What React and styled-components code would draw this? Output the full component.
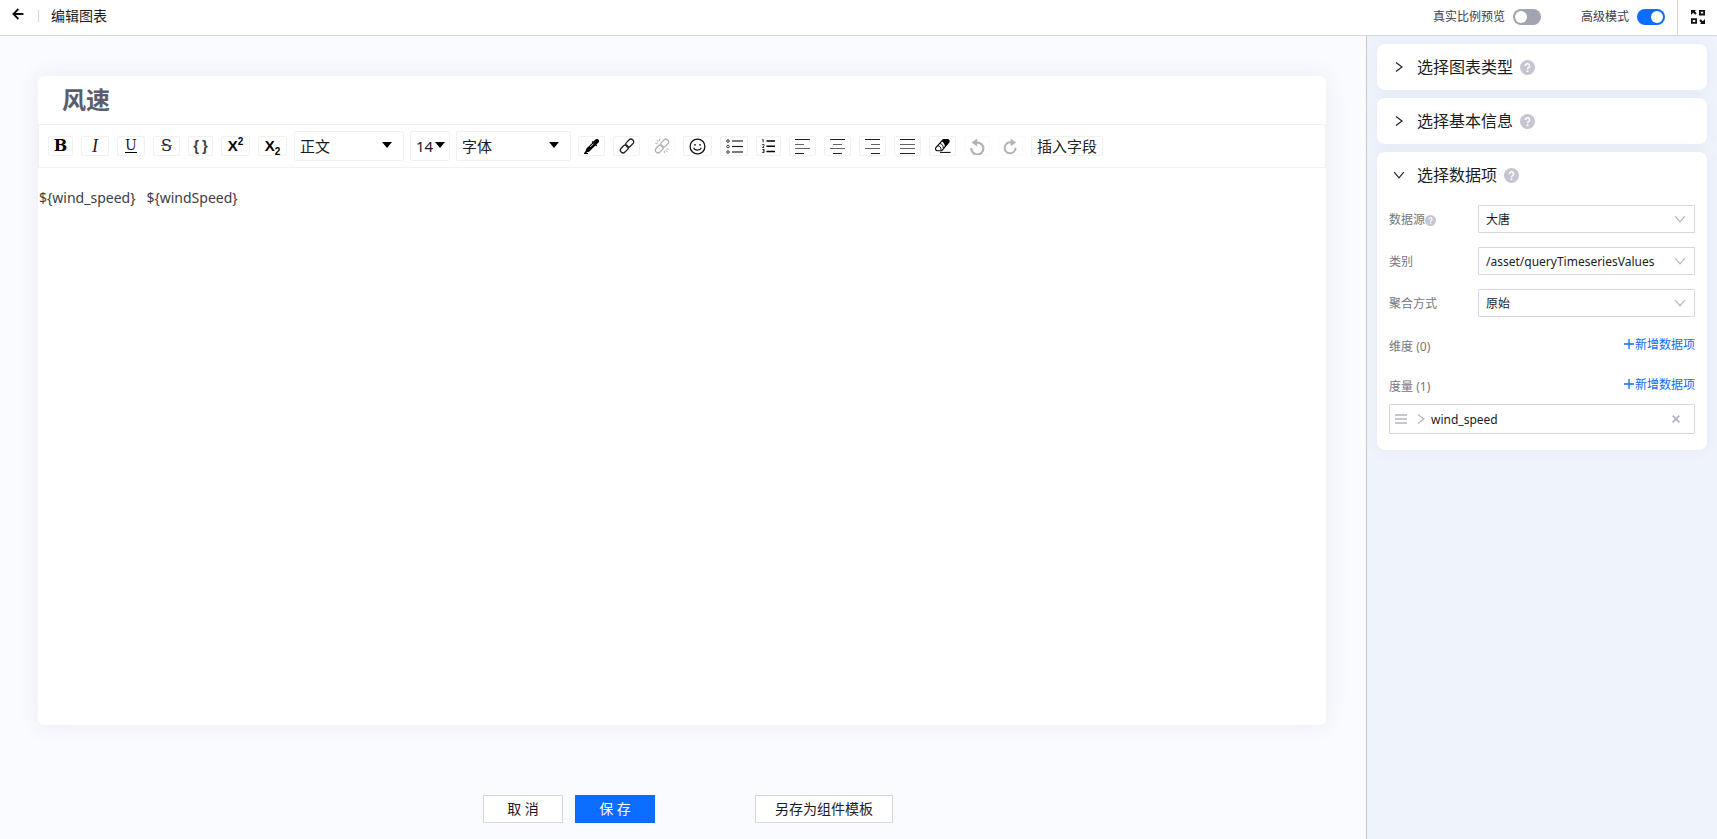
import React, { useState } from "react";
import styled, { createGlobalStyle } from "styled-components";

const ALIGN_LINES = {
  left: [[0, 15], [0, 9], [0, 15], [0, 9]],
  center: [[0, 15], [3, 12], [0, 15], [3, 12]],
  right: [[0, 15], [6, 15], [0, 15], [6, 15]],
  justify: [[0, 15], [0, 15], [0, 15], [0, 15]],
};

function AlignIcon({ type }) {
  return (
    <svg width="15" height="15" viewBox="0 0 15 15" aria-hidden="true">
      {ALIGN_LINES[type].map(([from, to], index) => (
        <rect
          key={index}
          x={from}
          y={[0, 5, 9, 14][index]}
          width={to - from}
          height="1"
          fill={index % 3 === 0 ? "#222" : "#666"}
        />
      ))}
    </svg>
  );
}

function BackIcon() {
  return (
    <svg width="12" height="12" viewBox="0 0 12 12" fill="none" stroke="#111" strokeWidth="1.8" aria-hidden="true">
      <path d="M11.4 6H1.8M6.4 1L1.4 6L6.4 11" />
    </svg>
  );
}

function FullscreenIcon() {
  return (
    <svg width="16" height="16" viewBox="0 0 16 16" aria-hidden="true">
      <path d="M9.9 1.9h4.2v3.6H9.9zM1.9 10.1h4.2v3.8H1.9z" fill="none" stroke="#111" strokeWidth="1.8" />
      <path d="M1 1h5L4.8 2.3l1.9 1.9-1.5 1.5-2-1.9L1 6zM15 15h-5l1.2-1.3-1.9-1.9 1.5-1.5 2 1.9L15 10z" fill="#111" />
    </svg>
  );
}

function Chevron({ open, size = 12, color = "#222" }) {
  return (
    <svg width={size} height={size} viewBox="0 0 12 12" fill="none" stroke={color} strokeWidth="1.2" aria-hidden="true">
      <path d={open ? "M1.2 3.2L6 8.8L10.8 3.2" : "M3 1.4L9 6L3 10.6"} />
    </svg>
  );
}

function HelpIcon({ size = 15 }) {
  return (
    <svg width={size} height={size} viewBox="0 0 15 15" aria-hidden="true">
      <circle cx="7.5" cy="7.5" r="7.5" fill="#c5c6d2" />
      <path d="M5.4 5.9a2.1 2.1 0 1 1 3.1 1.8c-.8.4-1 .8-1 1.5" fill="none" stroke="#fff" strokeWidth="1.5" />
      <circle cx="7.5" cy="11.2" r="1" fill="#fff" />
    </svg>
  );
}

function CaretIcon() {
  return (
    <svg width="10" height="6" viewBox="0 0 10 6" aria-hidden="true">
      <path d="M0 0h10L5 6z" fill="#000" />
    </svg>
  );
}

function ColorIcon() {
  return (
    <svg width="15" height="15" viewBox="0 0 15 15" aria-hidden="true">
      <path d="M14.4.6c-.9-.9-2.3-.8-3.2.1L9.4 2.6l-.8-.7-1 1 .8.8-5.7 5.6c-.7.8-.7 1.9-1.1 2.8L.2 14l.8.8 1.9-1.4c.9-.4 2-.4 2.8-1.1l5.6-5.7.8.8 1-1-.7-.8 1.9-1.8c.9-.9 1-2.3.1-3.2z" fill="#000" />
      <path d="M9.6 4.6L6.2 8" stroke="#fff" strokeWidth=".9" />
      <path d="M0 14.5h4" stroke="#000" />
    </svg>
  );
}

function LinkIcon({ broken }) {
  return (
    <svg width="16" height="16" viewBox="0 0 16 16" fill="none" stroke="currentColor" strokeWidth="1.3" aria-hidden="true">
      <rect x="-4.4" y="-2.7" width="8.8" height="5.4" rx="2.7" transform="translate(10.7 5.1) rotate(-45)" />
      <rect x="-4.4" y="-2.7" width="8.8" height="5.4" rx="2.7" transform="translate(5.3 10.9) rotate(-45)" />
      {broken && <path d="M1.2 5.2h2.6M2.4 1.8l2 2M5.6.8v2.4M14.8 11h-2.6M13.6 14.2l-2-2M10.4 15.2v-2.4" strokeWidth="1" />}
    </svg>
  );
}

function EmojiIcon() {
  return (
    <svg width="17" height="17" viewBox="0 0 17 17" fill="none" stroke="#111" aria-hidden="true">
      <circle cx="8.5" cy="8.5" r="7.4" strokeWidth="1.3" />
      <circle cx="6" cy="6.8" r=".9" fill="#111" stroke="none" />
      <circle cx="11" cy="6.8" r=".9" fill="#111" stroke="none" />
      <path d="M4.6 9.8c1.3 3.1 6.5 3.1 7.8 0" strokeWidth="1.1" />
    </svg>
  );
}

function BulletIcon() {
  return (
    <svg width="17" height="15" viewBox="0 0 17 15" fill="none" stroke="#222" aria-hidden="true">
      {[2, 7.5, 13].map((y) => (
        <g key={y}>
          <circle cx="2" cy={y} r="1.3" strokeWidth=".9" />
          <path d={`M6 ${y}h11`} strokeWidth="1.2" />
        </g>
      ))}
    </svg>
  );
}

function OrderedIcon() {
  return (
    <svg width="13" height="14" viewBox="0 0 13 14" fill="none" stroke="#000" aria-hidden="true">
      <path d="M4.5 2H13M4.5 7.2H13M4.5 12.4H13" strokeWidth="1.5" />
      <path d="M.2 1l1-.6v3M.2 5.6h1.9v1.2L.4 8.5h1.8M.2 10.5h1.9v3H.2M.8 12h1.3" strokeWidth=".8" />
    </svg>
  );
}

function EraserIcon() {
  return (
    <svg width="16" height="14" viewBox="0 0 16 14" aria-hidden="true">
      <path d="M1.1 8.3L7.3 1.4c.4-.5.9-.8 1.6-.8h3.5c1.5 0 2.2 1.5 1.3 2.7l-6.2 7.6c-.4.5-1 .8-1.6.8H2.3c-1.6 0-2.3-2.1-1.2-3.4z" fill="#fff" stroke="#000" strokeWidth="1.1" />
      <path d="M6.9 2.2L8.4.6h4.5l1.4 2-4.3 5.6c0-2.4-1.1-4.5-3.100-6z" fill="#000" />
      <path d="M2.600 6.800c2.100-.2 3.600 1.400 3.400 4.400M4.600 4.600c2.100 0 3.900 1.600 3.700 4.600" fill="none" stroke="#000" strokeWidth=".9" />
      <path d="M5 13.400h10.600" stroke="#000" />
    </svg>
  );
}

function HistoryIcon({ forward }) {
  return (
    <svg width="15" height="17" viewBox="0 0 15 17" fill="none" aria-hidden="true">
      {forward ? (
        <>
          <path d="M12.600 9.800A5.500 5.500 0 1 1 8.300 4.500" stroke="#b3b3b3" strokeWidth="2" />
          <path d="M7.700.8v7.400L13.200 4.500z" fill="#b3b3b3" />
        </>
      ) : (
        <>
          <path d="M1.400 10A6 6 0 1 0 6.800 4.600" stroke="#b3b3b3" strokeWidth="2.200" />
          <path d="M7.200.6v7.800L1.400 4.500z" fill="#b3b3b3" />
        </>
      )}
    </svg>
  );
}

function DragIcon() {
  return (
    <svg width="12" height="12" viewBox="0 0 12 12" aria-hidden="true">
      <path d="M0 2h12M0 6h12M0 10h12" stroke="#c5c6d2" strokeWidth="2" />
    </svg>
  );
}

function CloseIcon() {
  return (
    <svg width="8" height="8" viewBox="0 0 8 8" aria-hidden="true">
      <path d="M.7.7l6.600 6.600M7.300.7L.7 7.300" stroke="#b1b2c0" strokeWidth="1.700" />
    </svg>
  );
}

function PlusIcon() {
  return (
    <svg width="10" height="10" viewBox="0 0 10 10" aria-hidden="true">
      <path d="M0 5h10M5 0v10" stroke="#0b6dff" strokeWidth="1.300" />
    </svg>
  );
}

const INLINE_TOOLS = [
  { label: "粗体", width: 25, text: "bold" },
  { label: "斜体", width: 28, text: "italic" },
  { label: "下划线", width: 28, text: "underline" },
  { label: "删除线", width: 27, text: "strike" },
  { label: "代码", width: 25, text: "code" },
  { label: "上标", width: 29, text: "sup" },
  { label: "下标", width: 29, text: "sub" },
];

const BLOCK_TOOLS = [
  { label: "颜色", width: 27, icon: <ColorIcon /> },
  { label: "链接", width: 27, icon: <LinkIcon /> },
  { label: "取消链接", width: 27, icon: <LinkIcon broken />, disabled: true },
  { label: "表情", width: 29, icon: <EmojiIcon /> },
  { label: "无序列表", width: 28, icon: <BulletIcon /> },
  { label: "有序列表", width: 25, icon: <OrderedIcon /> },
  { label: "左对齐", width: 27, icon: <AlignIcon type="left" /> },
  { label: "居中", width: 27, icon: <AlignIcon type="center" /> },
  { label: "右对齐", width: 27, icon: <AlignIcon type="right" /> },
  { label: "两端对齐", width: 27, icon: <AlignIcon type="justify" /> },
  { label: "清除格式", width: 27, icon: <EraserIcon /> },
  { label: "撤销", width: 26, icon: <HistoryIcon />, disabled: true },
  { label: "重做", width: 25, icon: <HistoryIcon forward />, disabled: true },
];

function ToolText({ type }) {
  switch (type) {
    case "bold":
      return <BoldText>B</BoldText>;
    case "italic":
      return <ItalicText>I</ItalicText>;
    case "underline":
      return <UnderlineText>U</UnderlineText>;
    case "strike":
      return <StrikeText>S</StrikeText>;
    case "code":
      return (
        <CodeText>
          <span>{"{"}</span>
          <span>{"}"}</span>
        </CodeText>
      );
    case "sup":
      return (
        <ScriptText>
          X<sup>2</sup>
        </ScriptText>
      );
    default:
      return (
        <ScriptText>
          X<sub>2</sub>
        </ScriptText>
      );
  }
}

function Tools({ items }) {
  return items.map((tool) => (
    <Tool key={tool.label} type="button" aria-label={tool.label} $width={tool.width} disabled={tool.disabled}>
      {tool.icon || <ToolText type={tool.text} />}
    </Tool>
  ));
}

function ToolDropdown({ label, value, width, caret }) {
  return (
    <Dropdown $width={width} $caret={caret}>
      <select aria-label={label} defaultValue={value}>
        <option>{value}</option>
      </select>
      <CaretIcon />
    </Dropdown>
  );
}

function ToggleField({ label, checked, onChange }) {
  return (
    <ToggleLabel>
      {label}
      <Toggle type="checkbox" role="switch" checked={checked} onChange={(e) => onChange(e.target.checked)} />
    </ToggleLabel>
  );
}

function Section({ title, defaultOpen = false, children }) {
  const [open, setOpen] = useState(defaultOpen);

  return (
    <Panel>
      <PanelHeader type="button" aria-expanded={open} onClick={() => setOpen(!open)}>
        <Chevron open={open} />
        <PanelTitle>
          {title}
          <HelpIcon />
        </PanelTitle>
      </PanelHeader>
      {open && children}
    </Panel>
  );
}

function SelectField({ id, label, value, help }) {
  return (
    <Field>
      <FieldLabel htmlFor={id}>
        {label}
        {help && <HelpIcon size={11} />}
      </FieldLabel>
      <SelectBox>
        <select id={id} defaultValue={value}>
          <option>{value}</option>
        </select>
        <Chevron open color="#b1b2c0" />
      </SelectBox>
    </Field>
  );
}

function ItemsHeader({ label, count }) {
  return (
    <ItemsRow>
      <ItemsLabel>
        {label} ({count})
      </ItemsLabel>
      <AddButton type="button">
        <PlusIcon />
        新增数据项
      </AddButton>
    </ItemsRow>
  );
}

function App() {
  const [realScale, setRealScale] = useState(false);
  const [advanced, setAdvanced] = useState(true);

  return (
    <Page>
      <GlobalStyle />
      <Header>
        <BackButton type="button" aria-label="返回">
          <BackIcon />
        </BackButton>
        <Divider />
        <PageTitle>编辑图表</PageTitle>
        <HeaderTools>
          <ToggleField label="真实比例预览" checked={realScale} onChange={setRealScale} />
          <ToggleField label="高级模式" checked={advanced} onChange={setAdvanced} />
        </HeaderTools>
        <Fullscreen type="button" aria-label="全屏">
          <FullscreenIcon />
        </Fullscreen>
      </Header>
      <Body>
        <Main>
          <EditorCard>
            <ChartTitle>风速</ChartTitle>
            <Toolbar>
              <ToolGroup>
                <Tools items={INLINE_TOOLS} />
              </ToolGroup>
              <DropdownGroup>
                <ToolDropdown label="段落" value="正文" width={110} caret={11} />
                <ToolDropdown label="字号" value="14" width={40} caret={4} />
                <ToolDropdown label="字体" value="字体" width={115} caret={11} />
              </DropdownGroup>
              <ToolGroup>
                <Tools items={BLOCK_TOOLS} />
                <Tool type="button" $width={72}>
                  插入字段
                </Tool>
              </ToolGroup>
            </Toolbar>
            <Editor contentEditable suppressContentEditableWarning role="textbox" aria-label="内容" spellCheck={false}>
              {"${wind_speed}   ${windSpeed}"}
            </Editor>
          </EditorCard>
          <Footer>
            <Button type="button">取 消</Button>
            <Button type="button" $primary>
              保 存
            </Button>
            <TemplateButton type="button">另存为组件模板</TemplateButton>
          </Footer>
        </Main>
        <Sidebar>
          <Section title="选择图表类型" />
          <Section title="选择基本信息" />
          <Section title="选择数据项" defaultOpen>
            <Fields>
              <SelectField id="source" label="数据源" value="大唐" help />
              <SelectField id="category" label="类别" value="/asset/queryTimeseriesValues" />
              <SelectField id="aggregation" label="聚合方式" value="原始" />
            </Fields>
            <Items>
              <ItemsHeader label="维度" count={0} />
              <ItemsHeader label="度量" count={1} />
            </Items>
            <DataItem>
              <DragIcon />
              <Chevron color="#b1b2c0" />
              <ItemName>wind_speed</ItemName>
              <IconButton type="button" aria-label="删除">
                <CloseIcon />
              </IconButton>
            </DataItem>
          </Section>
        </Sidebar>
      </Body>
    </Page>
  );
}

export default App;

const GlobalStyle = createGlobalStyle`
  * {
    box-sizing: border-box;
  }
  body {
    margin: 0;
    color: #1b1c24;
    font-family: "Noto Sans", "Noto Sans CJK SC", sans-serif;
    font-size: 14px;
  }
  button,
  select {
    color: inherit;
    font: inherit;
  }
  svg {
    display: block;
    flex: none;
  }
`;
const Page = styled.div`
  display: flex;
  flex-direction: column;
  min-height: 100vh;
`;
const Header = styled.header`
  display: flex;
  align-items: center;
  height: 36px;
  padding-left: 12px;
  border-bottom: 1px solid #d5d6de;
  background: #fff;
`;
const IconButton = styled.button`
  display: flex;
  padding: 0;
  border: 0;
  background: none;
  cursor: pointer;
`;
const BackButton = styled(IconButton)`
  margin-bottom: 7px;
`;
const Divider = styled.span`
  width: 1px;
  height: 12px;
  margin: 0 12px 3px 14px;
  background: #d5d6de;
`;
const PageTitle = styled.h1`
  margin: 0 0 3px;
  font-size: 14px;
  font-weight: 400;
  line-height: 20px;
`;
const HeaderTools = styled.div`
  display: flex;
  gap: 40px;
  margin-left: auto;
  padding: 0 12px 2px 0;
`;
const ToggleLabel = styled.label`
  display: flex;
  align-items: center;
  gap: 8px;
  color: #3c3d48;
  font-size: 12px;
  line-height: 18px;
`;
const Toggle = styled.input`
  display: flex;
  align-items: center;
  width: 28px;
  height: 16px;
  margin: 0;
  padding: 2px;
  border-radius: 8px;
  background: ${(props) => (props.checked ? "#0b6dff" : "#a3a4b2")};
  appearance: none;
  cursor: pointer;
  &::before {
    width: 12px;
    height: 12px;
    margin-left: ${(props) => (props.checked ? "auto" : "0")};
    border-radius: 50%;
    background: #fff;
    content: "";
  }
`;
const Fullscreen = styled.button`
  display: flex;
  align-items: center;
  justify-content: center;
  align-self: stretch;
  width: 40px;
  padding: 0 0 2px;
  border: 0;
  border-left: 1px solid #d5d6de;
  background: none;
  cursor: pointer;
`;
const Body = styled.div`
  display: flex;
  flex: 1;
`;
const Main = styled.main`
  display: flex;
  flex: 1;
  flex-direction: column;
  min-width: 0;
  padding: 40px 40px 16px 38px;
  background: #fafbff;
`;
const EditorCard = styled.section`
  display: flex;
  flex: 1;
  flex-direction: column;
  border-radius: 6px;
  background: #fff;
  box-shadow: 0 0 24px rgba(50, 60, 110, 0.08);
`;
const ChartTitle = styled.h2`
  margin: 0;
  padding: 0 24px;
  color: #5b5d6b;
  font-size: 24px;
  font-weight: 700;
  line-height: 48px;
`;
const Toolbar = styled.div`
  display: flex;
  flex-wrap: wrap;
  align-items: center;
  gap: 7px;
  padding: 6px 9px;
  border: 1px solid #f1f1f1;
  font-size: 15px;
`;
const ToolGroup = styled.div`
  display: flex;
  flex-wrap: wrap;
  gap: 8px;
`;
const DropdownGroup = styled.div`
  display: flex;
  gap: 6px;
`;
const Tool = styled.button`
  display: flex;
  align-items: center;
  justify-content: center;
  width: ${(props) => props.$width}px;
  height: 20px;
  padding: 0;
  border: 1px solid #f1f1f1;
  border-radius: 2px;
  background: #fff;
  color: #222;
  line-height: 18px;
  white-space: nowrap;
  cursor: pointer;
  &:disabled {
    border-color: #fafafa;
    color: #b3b3b3;
    cursor: default;
  }
`;
const BoldText = styled.b`
  color: #000;
  font-family: "DejaVu Serif", serif;
  font-size: 16px;
`;
const ItalicText = styled.em`
  font-family: "Liberation Serif", serif;
  font-size: 18px;
`;
const UnderlineText = styled.span`
  border-bottom: 1px solid #000;
  font-family: "DejaVu Serif", serif;
  font-size: 14px;
  line-height: 13px;
`;
const StrikeText = styled.s`
  font-family: "DejaVu Serif", serif;
  font-size: 16px;
  text-decoration-color: #666;
`;
const CodeText = styled.span`
  display: flex;
  gap: 3px;
  color: #444;
  font-family: "Liberation Sans", sans-serif;
  font-size: 15px;
  font-weight: 700;
  line-height: 16px;
`;
const ScriptText = styled.span`
  color: #000;
  font-family: "Liberation Sans", sans-serif;
  font-size: 15px;
  font-weight: 700;
  line-height: 18px;
  sup,
  sub {
    font-size: 10px;
    line-height: 0;
  }
`;
const Dropdown = styled.div`
  display: grid;
  align-items: center;
  width: ${(props) => props.$width}px;
  height: 30px;
  border: 1px solid #f1f1f1;
  border-radius: 2px;
  background: #fff;
  select {
    grid-area: 1 / 1;
    width: 100%;
    height: 28px;
    padding: 0 5px;
    border: 0;
    background: none;
    appearance: none;
  }
  svg {
    grid-area: 1 / 1;
    justify-self: end;
    margin: 0 ${(props) => props.$caret}px 2px 0;
    pointer-events: none;
  }
`;
const Editor = styled.div`
  flex: 1;
  padding: 19px 1px;
  outline: none;
  color: #3c3d48;
  line-height: 22px;
  white-space: pre-wrap;
`;
const Footer = styled.footer`
  display: flex;
  justify-content: center;
  gap: 12px;
  margin-top: 70px;
  padding-left: 12px;
`;
const Button = styled.button`
  min-width: 80px;
  height: 28px;
  padding: 0 19px;
  border: 1px solid ${(props) => (props.$primary ? "#0b6dff" : "#d5d6de")};
  background: ${(props) => (props.$primary ? "#0b6dff" : "#fff")};
  color: ${(props) => (props.$primary ? "#fff" : "#1b1c24")};
  line-height: 20px;
  cursor: pointer;
`;
const TemplateButton = styled(Button)`
  margin-left: 88px;
`;
const Sidebar = styled.aside`
  display: flex;
  flex: 0 0 351px;
  flex-direction: column;
  gap: 8px;
  padding: 8px 10px;
  border-left: 1px solid #c8c9cc;
  background: #eff3fc;
`;
const Panel = styled.section`
  border-radius: 8px;
  background: #fff;
  box-shadow: 0 0 16px rgba(50, 80, 120, 0.06);
`;
const PanelHeader = styled.button`
  display: flex;
  align-items: center;
  gap: 12px;
  width: 100%;
  height: 46px;
  padding: 0 16px;
  border: 0;
  background: none;
  font-size: 16px;
  cursor: pointer;
`;
const PanelTitle = styled.span`
  display: flex;
  align-items: center;
  gap: 7px;
  line-height: 24px;
`;
const Fields = styled.div`
  display: flex;
  flex-direction: column;
  gap: 14px;
  padding: 7px 12px 14px;
`;
const Field = styled.div`
  display: flex;
  align-items: center;
`;
const FieldLabel = styled.label`
  display: flex;
  flex: 0 0 89px;
  align-items: center;
  padding-top: 2px;
  color: #757684;
  font-size: 12px;
  line-height: 18px;
`;
const SelectBox = styled.div`
  display: grid;
  flex: 1;
  align-items: center;
  height: 28px;
  border: 1px solid #d5d6de;
  border-radius: 1px;
  font-size: 12px;
  select {
    grid-area: 1 / 1;
    width: 100%;
    height: 26px;
    padding: 0 28px 0 7px;
    border: 0;
    background: none;
    appearance: none;
  }
  svg {
    grid-area: 1 / 1;
    justify-self: end;
    margin-right: 8px;
    pointer-events: none;
  }
`;
const Items = styled.div`
  display: flex;
  flex-direction: column;
  gap: 12px;
  padding: 0 12px 5px;
`;
const ItemsRow = styled.div`
  display: flex;
  align-items: center;
  justify-content: space-between;
  height: 28px;
  font-size: 12px;
`;
const ItemsLabel = styled.span`
  padding-top: 2px;
  color: #757684;
`;
const AddButton = styled.button`
  display: flex;
  align-items: center;
  gap: 1px;
  padding: 0 0 2px;
  border: 0;
  background: none;
  color: #0b6dff;
  cursor: pointer;
`;
const DataItem = styled.div`
  display: flex;
  align-items: center;
  height: 30px;
  margin: 0 12px;
  padding: 0 14px 0 5px;
  border: 1px solid #d5d6de;
  border-radius: 1px;
  font-size: 12px;
  gap: 8px;
  ${Panel} & {
    margin-bottom: 16px;
  }
`;
const ItemName = styled.span`
  flex: 1;
  margin-left: -4px;
`;
